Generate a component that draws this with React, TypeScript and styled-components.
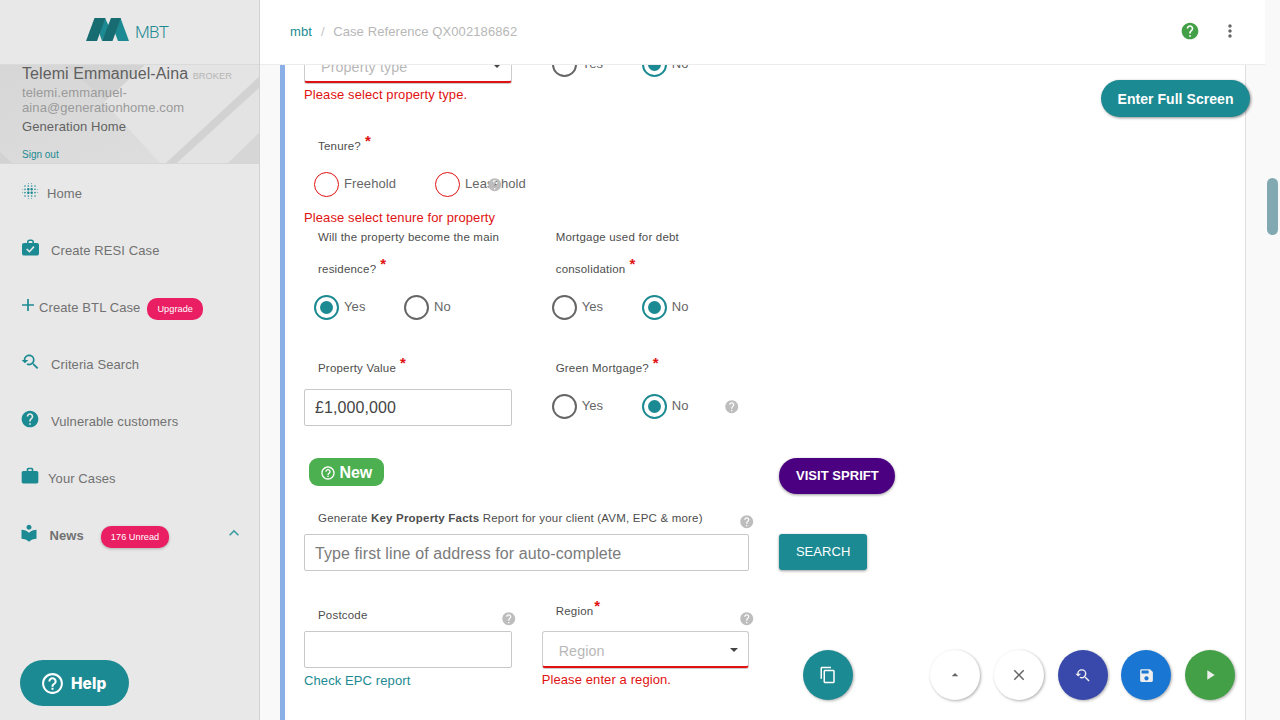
import React from "react";
import styled, { createGlobalStyle, css } from "styled-components";
import {
  MdArrowDropUp, MdBlurOn, MdClose, MdContentCopy, MdExpandLess, MdHelp, MdHelpOutline,
  MdLocalLibrary, MdMoreVert, MdPlayArrow, MdSave, MdWork, MdYoutubeSearchedFor,
} from "react-icons/md";

const teal = "#1c8a92";
const red = "#e01212";

const GlobalStyle = createGlobalStyle`
  * { box-sizing: border-box; }
  body { margin: 0; overflow: hidden; }
  svg { display: block; flex: none; }
  button, input { font: inherit; letter-spacing: inherit; }
`;

const Page = styled.div`
  position: relative;
  display: flex;
  width: 1280px;
  height: 720px;
  overflow: hidden;
  background: #f9f9f9;
  font-family: "Liberation Sans", Arial, sans-serif;
  font-size: 13px;
  letter-spacing: 0.1px;
  color: #666;
`;

const Sidebar = styled.aside`
  flex: none;
  width: 260px;
  background: #e8e8e8;
  border-right: 1px solid #d2d2d2;
`;

const Brand = styled.div`
  display: flex;
  align-items: center;
  height: 65px;
  padding: 0 0 5px 86px;
  border-bottom: 1px solid #dadada;
`;

const BrandName = styled.span`
  margin: 4px 0 0 6px;
  font: 300 17px/20px Roboto, "Liberation Sans", sans-serif;
  letter-spacing: -0.6px;
  color: ${teal};
`;

const Profile = styled.div`
  position: relative;
  height: 99px;
  padding-left: 22px;
  border-bottom: 1px solid #d6d6d6;
`;

const ProfileArt = styled.svg`
  position: absolute;
  inset: 0;
`;

const ProfileText = styled.div`
  position: relative;
  display: flex;
  flex-direction: column;
`;

const UserName = styled.div`
  font-size: 16px;
  line-height: 18px;
  letter-spacing: 0.08px;
  white-space: nowrap;
  color: #606060;
`;

const Role = styled.span`
  font-size: 9.3px;
  letter-spacing: 0;
  color: #b5b5b5;
`;

const Email = styled.div`
  line-height: 15px;
  color: #9a9a9a;
`;

const Company = styled.div`
  margin-top: 4px;
  line-height: 15px;
  color: #626262;
`;

const SignOut = styled.a`
  margin-top: 15px;
  font-size: 10px;
  line-height: 12px;
  letter-spacing: 0;
  color: ${teal};
`;

const Menu = styled.nav`
  display: flex;
  flex-direction: column;
  padding-top: 1px;
`;

const MenuItem = styled.a<{ $bold?: boolean }>`
  display: flex;
  align-items: center;
  height: 57px;
  color: #717171;
  font-weight: ${(p) => (p.$bold ? 700 : 400)};
`;

const IconSlot = styled.span<{ $left: number; $width: number }>`
  flex: none;
  width: ${(p) => p.$width}px;
  margin-left: ${(p) => p.$left}px;
  padding-bottom: 6px;
  color: ${teal};
`;

const Pill = styled.span<{ $gap: number; $shadow?: boolean }>`
  margin: 3px 0 0 ${(p) => p.$gap}px;
  padding: 0 10px;
  border-radius: 10px;
  background: #e91e63;
  color: #fff;
  font-size: 9.2px;
  font-weight: 400;
  line-height: 22px;
  letter-spacing: 0.03px;
  ${(p) => p.$shadow && css`box-shadow: 0 1px 3px rgba(0, 0, 0, 0.25);`}
`;

const Caret = styled.span`
  margin: 0 15.5px 6px auto;
  color: #3f9ba2;
`;

const Main = styled.div`
  display: flex;
  flex-direction: column;
  width: 1005px;
`;

const Header = styled.header`
  display: flex;
  flex: none;
  align-items: center;
  height: 65px;
  padding: 0 25px 2px 30px;
  background: #fff;
  border-bottom: 1px solid #ececec;
  color: #b7b7b7;
`;

const Crumb = styled.a`
  color: ${teal};
`;

const Slash = styled.span`
  margin: 0 8.5px 0 9px;
  color: #c4c4c4;
`;

const HeaderIcons = styled.div`
  display: flex;
  align-items: center;
  gap: 20px;
  margin-left: auto;
  color: #666;
`;

const Viewport = styled.main`
  flex: 1;
  min-height: 0;
  margin: 0 19px 0 20px;
  overflow: hidden;
  background: #fff;
  border-left: 5px solid #8aaee6;
  border-right: 1px solid #dedede;
`;

const Form = styled.div`
  display: flex;
  flex-direction: column;
  margin-top: -19px;
  padding-left: 19px;
`;

const FormRow = styled.div<{ $height: number; $top?: number }>`
  display: flex;
  height: ${(p) => p.$height}px;
  padding-top: ${(p) => p.$top ?? 0}px;
`;

const Cell = styled.div<{ $wide?: boolean; $top?: number }>`
  flex: none;
  width: ${(p) => (p.$wide ? 475.4 : 237.7)}px;
  padding: ${(p) => p.$top ?? 0}px 30px 0 0;
`;

const FieldBox = styled.div`
  padding-top: 5px;
`;

const Label = styled.label<{ $lift?: number }>`
  display: block;
  flex: 1;
  width: 200px;
  padding-left: 14px;
  font-size: 11.5px;
  line-height: 32px;
  letter-spacing: 0.2px;
  white-space: nowrap;
  color: #4d4d4d;
  margin-top: ${(p) => -(p.$lift ?? 0)}px;
`;

const LabelRow = styled.div`
  display: flex;
  align-items: flex-start;
  height: 32px;
`;

const HintIcon = styled(MdHelp)<{ $top?: number; $right?: number }>`
  width: 15.5px;
  height: 15.5px;
  margin: ${(p) => p.$top ?? 0}px ${(p) => p.$right ?? 0}px 0 0;
  color: #bdbdbd;
`;

const Star = styled.span<{ $gap?: number }>`
  margin-left: ${(p) => p.$gap ?? 4}px;
  font-size: 15px;
  font-weight: 700;
  line-height: 0;
  vertical-align: 4px;
  letter-spacing: 0;
  color: ${red};
`;

const Choices = styled.div<{ $short?: boolean }>`
  position: relative;
  display: flex;
  align-items: center;
  height: ${(p) => (p.$short ? 37 : 44)}px;
  padding-left: 10px;
`;

const Choice = styled.label<{ $width: number }>`
  display: flex;
  flex: none;
  align-items: center;
  gap: 5px;
  width: ${(p) => p.$width}px;
  line-height: 15px;
`;

const ChoiceText = styled.span`
  margin-top: -2px;
`;

const Ring = styled.span<{ $on?: boolean; $error?: boolean }>`
  display: flex;
  align-items: center;
  justify-content: center;
  flex: none;
  width: 25px;
  height: 25px;
  border: ${(p) => (p.$error ? `1px solid ${red}` : `2px solid ${p.$on ? teal : "#666"}`)};
  border-radius: 50%;
  &::after {
    content: "";
    display: ${(p) => (p.$on ? "block" : "none")};
    width: 13px;
    height: 13px;
    border-radius: 50%;
    background: ${teal};
  }
`;

const FloatingHint = styled.span`
  position: absolute;
  left: 182.5px;
  top: 15px;
`;

const ErrorText = styled.div<{ $top: number }>`
  padding-top: ${(p) => p.$top}px;
  line-height: 15px;
  white-space: nowrap;
  color: ${red};
`;

const TextInput = styled.input<{ $drop?: number }>`
  display: block;
  width: 100%;
  height: 37px;
  padding: ${(p) => p.$drop ?? 0}px 10px 0;
  border: 1px solid #c8c8c8;
  border-radius: 2px;
  outline: none;
  background: #fff;
  font-size: 16px;
  letter-spacing: 0.09px;
  color: #444;
  &::placeholder { color: #7b7b7b; opacity: 1; }
`;

const Select = styled.div<{ $low?: boolean }>`
  display: flex;
  align-items: center;
  justify-content: space-between;
  height: 37px;
  padding: ${(p) => (p.$low ? 5 : 3)}px 10px 0 16px;
  border: 1px solid #ccc;
  border-bottom: 2px solid ${red};
  border-radius: 3px;
  box-shadow: 0 1px 0 #ccc;
  font-size: 14.3px;
  color: #b8b8b8;
`;

const Arrow = styled.span`
  margin-top: -2px;
  border: 4.5px solid transparent;
  border-top-color: #444;
  border-bottom: 0;
`;

const LinkText = styled.a`
  display: block;
  padding-top: 5px;
  line-height: 15px;
  color: ${teal};
`;

const NewBadge = styled.span`
  display: inline-flex;
  align-items: center;
  gap: 4px;
  height: 28px;
  width: 75px;
  margin-left: 5px;
  padding: 1px 0 0 10.5px;
  border-radius: 9px;
  background: #4caf50;
  color: #fff;
  font-size: 16px;
  font-weight: 700;
  letter-spacing: -0.1px;
`;

const Button = styled.button<{ $round?: boolean }>`
  height: 36px;
  padding: 0 0 2px;
  width: ${(p) => (p.$round ? 116 : 87.5)}px;
  border: 0;
  border-radius: ${(p) => (p.$round ? 18 : 3)}px;
  background: ${(p) => (p.$round ? "#4b0082" : teal)};
  color: #fff;
  font-weight: ${(p) => (p.$round ? 700 : 400)};
  letter-spacing: 0.05px;
  box-shadow: 0 1px 3px rgba(0, 0, 0, 0.4);
`;

const FullScreen = styled.button`
  position: absolute;
  left: 1101px;
  top: 80px;
  width: 149px;
  height: 37px;
  padding: 0;
  border: 0;
  border-radius: 19px;
  background: ${teal};
  color: #fff;
  font-size: 14px;
  font-weight: 700;
  letter-spacing: 0.05px;
  box-shadow: 1px 1px 3px rgba(0, 0, 0, 0.45);
`;

const HelpButton = styled.button`
  position: absolute;
  left: 20px;
  top: 660px;
  display: flex;
  align-items: center;
  gap: 6px;
  width: 109px;
  height: 46px;
  padding: 0 0 0 20px;
  border: 0;
  border-radius: 23px;
  background: ${teal};
  color: #fff;
  font: 800 15.4px Inter, "Liberation Sans", sans-serif;
`;

const ActionBar = styled.div`
  position: absolute;
  right: 45px;
  top: 650px;
  display: flex;
  gap: 13.7px;
`;

const Fab = styled.button<{ $bg: string; $ink: string; $after?: number }>`
  display: flex;
  align-items: center;
  justify-content: center;
  width: 50px;
  height: 50px;
  padding: 0;
  margin-right: ${(p) => p.$after ?? 0}px;
  border: 0;
  border-radius: 50%;
  background: ${(p) => p.$bg};
  color: ${(p) => p.$ink};
  box-shadow: 1px 1px 3px rgba(0, 0, 0, 0.32);
`;

const ScrollThumb = styled.div`
  width: 11px;
  height: 57px;
  margin: 178px 0 0 2px;
  border-radius: 6px;
  background: #82a9b1;
`;

const Logo = () => (
  <svg width="43" height="23" viewBox="0 0 43 23">
    <path d="M19 0 22.8 8 16 23 13.3 15z" fill={teal} />
    <path d="M34.5 0 43 23H32l-3-8z" fill={teal} />
    <path d="M8.5 0H19.5L11 23H0z" fill="#176c72" />
    <path d="M25 0H35L26.5 23H16z" fill="#176c72" />
  </svg>
);

const CheckedCase = () => (
  <svg width="17" height="18" viewBox="0 0 17 18" fill="none">
    <path d="M2 4H15A2 2 0 0 1 17 6V14.5A2 2 0 0 1 15 16.5H2A2 2 0 0 1 0 14.5V6A2 2 0 0 1 2 4Z" fill="currentColor" />
    <path d="M5.8 4.5V3.2A1.8 1.8 0 0 1 7.6 1.2H9.4A1.8 1.8 0 0 1 11.2 3.2V4.5" stroke="currentColor" strokeWidth="1.6" />
    <path d="M4.7 10 7.4 12.7 12 7.6" stroke="#e8e8e8" strokeWidth="1.6" />
  </svg>
);

const Plus = () => (
  <svg width="12" height="12" viewBox="0 0 12 12">
    <path d="M6 0V12M0 6H12" stroke="currentColor" strokeWidth="1.7" />
  </svg>
);

const Radio = ({ text, on, error, width = 90 }: { text: string; on?: boolean; error?: boolean; width?: number }) => (
  <Choice $width={width}>
    <Ring $on={on} $error={error} />
    <ChoiceText>{text}</ChoiceText>
  </Choice>
);

const YesNo = ({ value, short, hint }: { value: "Yes" | "No"; short?: boolean; hint?: boolean }) => (
  <Choices $short={short}>
    <Radio text="Yes" on={value === "Yes"} />
    <Radio text="No" on={value === "No"} width={82} />
    {hint && <HintIcon $top={2} />}
  </Choices>
);

const menu = [
  { text: "Home", icon: <MdBlurOn size={20} />, left: 20, width: 27 },
  { text: "Create RESI Case", icon: <CheckedCase />, left: 22, width: 29 },
  { text: "Create BTL Case", icon: <Plus />, left: 22, width: 17, pill: "Upgrade", gap: 7 },
  { text: "Criteria Search", icon: <MdYoutubeSearchedFor size={20} />, left: 20.4, width: 30.6 },
  { text: "Vulnerable customers", icon: <MdHelp size={20} />, left: 20.4, width: 30.6 },
  { text: "Your Cases", icon: <MdWork size={20} />, left: 20.4, width: 27.6 },
  { text: "News", icon: <MdLocalLibrary size={20} />, left: 19.4, width: 30.1, pill: "176 Unread", gap: 17, bold: true },
];

export default function App() {
  return (
    <Page>
      <GlobalStyle />
      <Sidebar>
        <Brand>
          <Logo />
          <BrandName>MBT</BrandName>
        </Brand>
        <Profile>
          <ProfileArt width="259" height="98" viewBox="0 0 259 98">
            <defs>
              <linearGradient id="shade" x1="0" y1="0" x2="1" y2="1">
                <stop offset="0" stopColor="#d6d6d6" />
                <stop offset="1" stopColor="#dfdfdf" />
              </linearGradient>
            </defs>
            <rect width="259" height="98" fill="url(#shade)" />
            <path d="M65 0H145L107 37Z" fill="#d3d3d3" />
            <path d="M145 0H259V12L166 98H160L104 37Z" fill="#e4e4e4" />
            <path d="M259 12V23L177 98H166Z" fill="#d2d2d2" />
            <path d="M259 23V68L228 98H177Z" fill="#e3e3e3" />
            <path d="M259 68V98H228Z" fill="#d6d6d6" />
            <path d="M0 87 12 98H0Z" fill="#d2d2d2" />
          </ProfileArt>
          <ProfileText>
            <UserName>Telemi Emmanuel-Aina <Role>BROKER</Role></UserName>
            <Email>telemi.emmanuel-<br />aina@generationhome.com</Email>
            <Company>Generation Home</Company>
            <SignOut>Sign out</SignOut>
          </ProfileText>
        </Profile>
        <Menu>
          {menu.map((m) => (
            <MenuItem key={m.text} $bold={m.bold}>
              <IconSlot $left={m.left} $width={m.width}>{m.icon}</IconSlot>
              {m.text}
              {m.pill && <Pill $gap={m.gap ?? 0} $shadow={m.bold}>{m.pill}</Pill>}
              {m.bold && <Caret><MdExpandLess size={20} /></Caret>}
            </MenuItem>
          ))}
        </Menu>
      </Sidebar>

      <Main>
        <Header>
          <Crumb>mbt</Crumb>
          <Slash>/</Slash>
          <span>Case Reference QX002186862</span>
          <HeaderIcons>
            <MdHelp size={20} color="#43a047" />
            <MdMoreVert size={20} />
          </HeaderIcons>
        </Header>
        <Viewport>
          <Form>
            <FormRow $height={60}>
              <Cell>
                <Select $low>Property type<Arrow /></Select>
                <ErrorText $top={4}>Please select property type.</ErrorText>
              </Cell>
              <Cell><YesNo value="No" short /></Cell>
            </FormRow>

            <FormRow $height={115} $top={24}>
              <Cell $wide>
                <Label>Tenure?<Star>*</Star></Label>
                <Choices>
                  <Radio text="Freehold" error width={121} />
                  <Radio text="Leasehold" error width={121} />
                  <FloatingHint><HintIcon /></FloatingHint>
                </Choices>
                <ErrorText $top={4}>Please select tenure for property</ErrorText>
              </Cell>
            </FormRow>

            <FormRow $height={108}>
              <Cell>
                <Label>Will the property become the main<br />residence?<Star>*</Star></Label>
                <YesNo value="Yes" />
              </Cell>
              <Cell>
                <Label>Mortgage used for debt<br />consolidation<Star>*</Star></Label>
                <YesNo value="No" />
              </Cell>
            </FormRow>

            <FormRow $height={129} $top={23}>
              <Cell>
                <LabelRow><Label>Property Value<Star>*</Star></Label></LabelRow>
                <FieldBox><TextInput defaultValue="£1,000,000" /></FieldBox>
              </Cell>
              <Cell>
                <Label>Green Mortgage?<Star>*</Star></Label>
                <YesNo value="No" hint />
              </Cell>
            </FormRow>

            <FormRow $height={44}>
              <Cell $wide><NewBadge><MdHelpOutline size={16} />New</NewBadge></Cell>
              <Cell><Button $round>VISIT SPRIFT</Button></Cell>
            </FormRow>

            <FormRow $height={93}>
              <Cell $wide>
                <LabelRow>
                  <Label>Generate <b>Key Property Facts</b> Report for your client (AVM, EPC &amp; more)</Label>
                  <HintIcon $top={12} $right={-5} />
                </LabelRow>
                <TextInput $drop={2} placeholder="Type first line of address for auto-complete" />
              </Cell>
              <Cell $top={32}><Button>SEARCH</Button></Cell>
            </FormRow>

            <FormRow $height={120} $top={4}>
              <Cell>
                <LabelRow><Label>Postcode</Label><HintIcon $top={12} $right={-5} /></LabelRow>
                <TextInput />
                <LinkText>Check EPC report</LinkText>
              </Cell>
              <Cell>
                <LabelRow><Label $lift={4}>Region<Star $gap={1}>*</Star></Label><HintIcon $top={12} $right={-5} /></LabelRow>
                <Select>Region<Arrow /></Select>
                <ErrorText $top={4}>Please enter a region.</ErrorText>
              </Cell>
            </FormRow>
          </Form>
        </Viewport>
      </Main>
      <ScrollThumb />

      <FullScreen>Enter Full Screen</FullScreen>
      <HelpButton><MdHelpOutline size={25} />Help</HelpButton>
      <ActionBar>
        <Fab $bg={teal} $ink="#fff" $after={64}><MdContentCopy size={18} /></Fab>
        <Fab $bg="#fff" $ink="#666"><MdArrowDropUp size={16} /></Fab>
        <Fab $bg="#fff" $ink="#666"><MdClose size={18} /></Fab>
        <Fab $bg="#3949ab" $ink="#eee"><MdYoutubeSearchedFor size={17} /></Fab>
        <Fab $bg="#1976d2" $ink="#eee"><MdSave size={17} /></Fab>
        <Fab $bg="#43a047" $ink="#eee"><MdPlayArrow size={16} /></Fab>
      </ActionBar>
    </Page>
  );
}
